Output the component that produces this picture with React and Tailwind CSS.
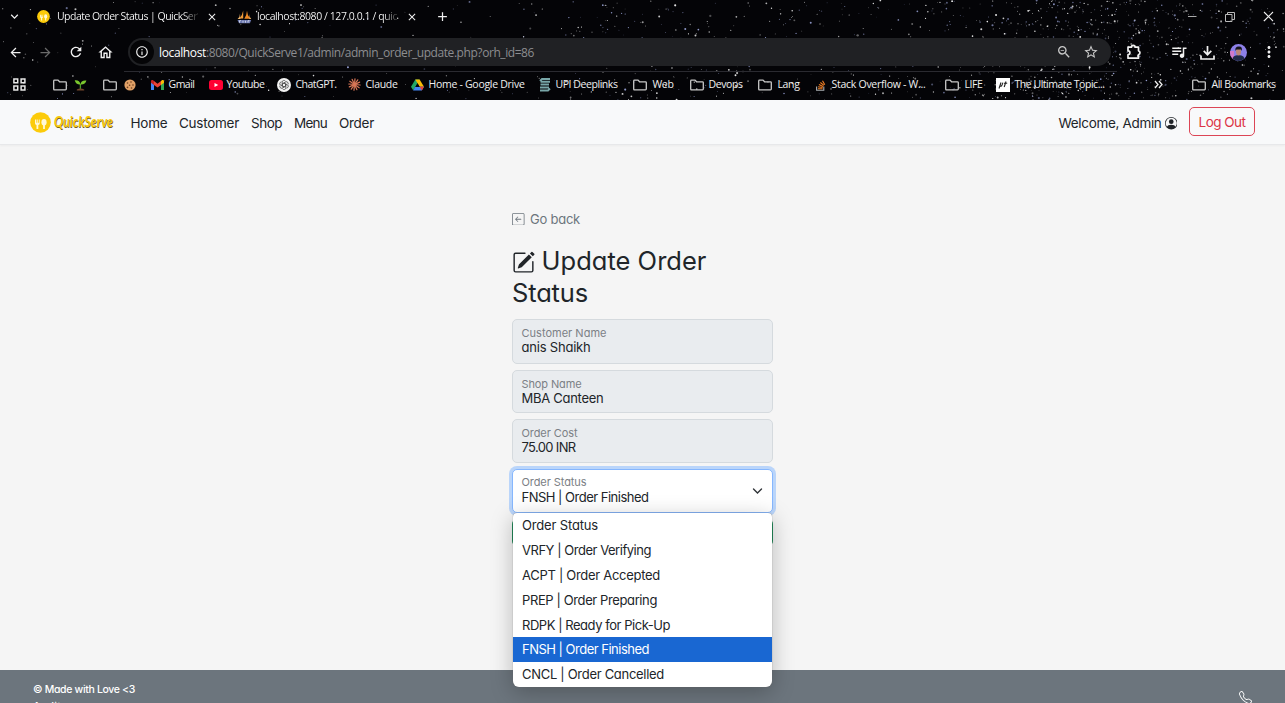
import React, { useLayoutEffect, useRef, useState } from "react";
import { MdArrowBack, MdArrowForward, MdRefresh, MdOutlineHome, MdInfoOutline, MdZoomOut, MdStarBorder, MdQueueMusic, MdClose, MdAdd, MdMoreVert, MdExpandMore } from "react-icons/md";
import { BsPersonCircle, BsArrowLeftSquare, BsPencilSquare, BsTelephone } from "react-icons/bs";

// One line of text whose tracking is adjusted to fill the width given by its class.
function Fit({ className = "", children }) {
  const box = useRef(null);
  const text = useRef(null);
  const [tracking, setTracking] = useState(0);
  useLayoutEffect(() => {
    const natural = text.current.getBoundingClientRect().width;
    setTracking((box.current.clientWidth - natural) / String(children).length);
  }, [children]);
  return (
    <span ref={box} className={`inline-block shrink-0 whitespace-nowrap ${className}`}>
      <span ref={text} style={{ letterSpacing: tracking }}>{children}</span>
    </span>
  );
}

function makeStars() {
  let seed = 4217;
  const rnd = () => {
    seed = (seed * 1664525 + 1013904223) % 4294967296;
    return seed / 4294967296;
  };
  const stars = [];
  for (let i = 0; i < 1500; i++) {
    let x;
    const zone = rnd();
    if (zone < 0.38) x = rnd() * 1285;
    else if (zone < 0.5) x = 560 + rnd() * 300;
    else x = 1095 + (rnd() + rnd() + rnd() - 1.5) * 190;
    stars.push({ x, y: rnd() * 100, r: 0.4 + rnd() * rnd() * 0.8, o: 0.25 + rnd() * 0.7, blue: rnd() < 0.3 });
  }
  return stars;
}
const stars = makeStars();

function StarField() {
  return (
    <svg className="absolute inset-0" width="1285" height="100" viewBox="0 0 1285 100">
      {stars.map((s, i) => (
        <circle key={i} cx={s.x} cy={s.y} r={s.r} fill={s.blue ? "#9aa4d8" : "#ffffff"} opacity={s.o} />
      ))}
    </svg>
  );
}

const Folder = () => (
  <svg width="14" height="12" viewBox="0 0 14 12" fill="none" stroke="#c8c8c8" strokeWidth="1.3">
    <path d="M.7 1.9Q.7 1.1 1.5 1.1H5L6.6 2.8h5.9q.8 0 .8.8v6.5q0 .8-.8.8h-11q-.8 0-.8-.8z" />
  </svg>
);
const Apps = () => (
  <svg width="13" height="13" viewBox="0 0 13 13" fill="none" stroke="#e8e8e8" strokeWidth="1.5">
    <path d="M.9.9h3.8v3.8H.9zM8.1.9h3.8v3.8H8.1zM.9 8.1h3.8v3.8H.9zM8.1 8.1h3.8v3.8H8.1z" />
  </svg>
);
const Sprout = () => (
  <svg width="13" height="13" viewBox="0 0 13 13">
    <path d="M6.4 11V6" stroke="#4c9a2a" strokeWidth="1.3" />
    <path d="M6.4 6.5C3.5 6.7 1.3 5.2.7 2.3 3.7 1.9 6 3 6.4 6.5zM6.4 6.5C6.7 3.3 9 2.2 12.4 2.6 11.7 5.5 9.5 6.9 6.4 6.5z" fill="#7bc72e" />
    <path d="M2.8 11.6q3.6-2 7.400 0v.9H2.800z" fill="#75472c" />
  </svg>
);
const Cookie = () => (
  <svg width="12" height="12" viewBox="0 0 12 12">
    <circle cx="6" cy="6" r="5.6" fill="#e0a066" />
    <g fill="#6d3e1f"><circle cx="3.5" cy="4" r=".8" /><circle cx="7" cy="3" r=".8" /><circle cx="5.600" cy="6.300" r=".8" /><circle cx="9" cy="6" r=".8" /><circle cx="3.500" cy="8.400" r=".8" /><circle cx="7.500" cy="9" r=".8" /></g>
  </svg>
);
const Gmail = () => (
  <svg width="13" height="10" viewBox="0 0 13 10">
    <path d="M0 1.500V10h3V4z" fill="#4285f4" /><path d="M10 4v6h3V1.500z" fill="#34a853" />
    <path d="M10 1v4l3-2.200V1.400C13 0 11.600-.4 10.600.5z" fill="#fbbc04" />
    <path d="M3 1v4l3.500 2.600L10 5V1L6.500 3.700z" fill="#ea4335" />
    <path d="M0 1.400v1.400L3 5V1L2.400.5C1.400-.4 0 0 0 1.400z" fill="#c5221f" />
  </svg>
);
const Youtube = () => (
  <svg width="14" height="10" viewBox="0 0 14 10"><rect width="14" height="10" rx="2.500" fill="#ff0033" /><path d="M5.500 2.900 9.200 5 5.500 7.100z" fill="#fff" /></svg>
);
const ChatGpt = () => (
  <svg width="14" height="14" viewBox="0 0 14 14">
    <circle cx="7" cy="7" r="7" fill="#f3f3f3" />
    <g fill="none" stroke="#444" strokeWidth=".75">
      {[0, 60, 120, 180, 240, 300].map((a) => <path key={a} transform={`rotate(${a} 7 7)`} d="M5.200 6V3.900C5.200 2.300 7.500 1.900 8.500 3.200M5.200 6 7 5l1.800 1" />)}
    </g>
  </svg>
);
const Claude = () => (
  <svg width="13" height="13" viewBox="0 0 13 13" stroke="#d97757" strokeWidth="1.200" strokeLinecap="round">
    {[0, 30, 60, 90, 120, 150].map((a) => <path key={a} transform={`rotate(${a + 5} 6.500 6.500)`} d="M6.500.8v11.400" />)}
  </svg>
);
const Drive = () => (
  <svg width="13" height="12" viewBox="0 0 13 12">
    <path d="M4.300.5h4.300L4.500 7.700l-2.300 3.600L0 7.800z" fill="#23a566" /><path d="M4.300.5h4.300L13 7.800H8.600z" fill="#fbbc04" />
    <path d="M4.200 7.800H13l-2.200 3.700H2.100z" fill="#4285f4" /><path d="M8.600 7.800H13l-2.200 3.700z" fill="#ea4335" />
    <path d="M6.500 4.200 4.300 7.900h4.400z" fill="#05060a" />
  </svg>
);
const Upi = () => (
  <svg width="12" height="14" viewBox="0 0 12 14" fill="none" stroke="#78a6a8" strokeWidth="1.900">
    <path d="M11 1H3L1 3M11 3.800H1.500M1.500 6.500H10M10 9.500H1M1 12.500h8l2-2" />
  </svg>
);
const Stack = () => (
  <svg width="10" height="12" viewBox="0 0 10 12" fill="none" strokeWidth="1.100">
    <path d="M.6 7.500v3.800h7.200V7.500" stroke="#a9aeb3" />
    <path d="M2 9.700h4.600M2.100 7.700l4.500.8M2.900 5.600l4.200 1.900M4.400 3.500 7.900 6.400M6.500 1.800l2.300 3.900" stroke="#f48024" />
  </svg>
);
const Topic = () => (
  <svg width="14" height="14" viewBox="0 0 14 14"><rect width="14" height="14" fill="#fff" /><path d="M3 10.500 5 4.500M4.300 8.200q1.500.6 2.600-3.500M8.200 9 10 3.500M8 5.200h3.200" stroke="#222" strokeWidth="1.100" fill="none" /></svg>
);
const Sails = () => (
  <svg width="15" height="14" viewBox="0 0 15 14">
    <path d="M6.200.5v8H2.500Q5.300 5.500 6.200.5z" fill="#f29b38" />
    <path d="M10 .8q.2 4.500 3.200 8H7.300Q9.800 5 10 .8z" fill="#f08a24" />
    <path d="M3 3.500Q3 7 .6 9h2.800zM12.300 4q0 3 2 5h-2z" fill="#e9b16b" />
    <path d="M.5 10h13.700l-1.300 3.300H2z" fill="#6c78af" />
    <path d="M2.500 12.700v-2h1.500M6 10.700v2M8.500 10.700v2M11 12.700v-2h1.500" stroke="#dfe2ef" strokeWidth=".8" fill="none" />
  </svg>
);
const Extension = () => (
  <svg width="16" height="16" viewBox="0 0 16 16" fill="none" stroke="#f1f1f1" strokeWidth="1.700" strokeLinejoin="round">
    <path d="M2 3.200h3.500a1.800 1.800 0 0 1 3.600 0h3.400v3.600a1.900 1.900 0 0 1 0 3.700v3.700H2v-3.500a1.900 1.900 0 0 0 0-3.800z" />
  </svg>
);
const Logo = ({ size }) => (
  <svg width={size} height={size} viewBox="0 0 21 21">
    <circle cx="10.500" cy="10.500" r="10.300" fill="#fccb0a" />
    <path d="M5 7.500v3.800q0 1.500 1.500 1.700V17h1.800v-4q1.500-.2 1.500-1.700V7.500h-.7v3.300h-.9V7.500h-.9v3.300h-.9V7.500z" fill="#fff8d8" />
    <ellipse cx="14" cy="10.300" rx="2.600" ry="3.300" fill="#fff8d8" /><path d="M13.100 12h1.800v5h-1.800z" fill="#fff8d8" />
  </svg>
);
const Download = () => (
  <svg width="15" height="15" viewBox="0 0 15 15" fill="none" stroke="#f1f1f1" strokeWidth="1.700"><path d="M7.500 1v8.500M3.700 5.900 7.500 9.700l3.800-3.800M1 10.500V14h13v-3.500" /></svg>
);
const Avatar = () => (
  <svg width="17" height="17" viewBox="0 0 17 17">
    <defs><clipPath id="face"><circle cx="8.500" cy="8.500" r="8.500" /></clipPath></defs>
    <g clipPath="url(#face)"><path d="M0 0h17v17H0z" fill="#8d80e8" /><path d="M0 7h4v10H0z" fill="#d17ac8" /><path d="M2 17q0-6 6.500-6t6.500 6z" fill="#202a48" /><ellipse cx="8.500" cy="7.800" rx="2.500" ry="3.600" fill="#b98676" /><path d="M5.500 7Q4.500 2.300 9 2.400q4 .2 2.600 4.600L11 5.500H6.500z" fill="#15151d" /></g>
  </svg>
);

const bookmarks = [
  { icon: Apps, item: "w-[40px]", box: "w-[14px]" },
  { icon: Folder, item: "w-[21px]", box: "w-[14px]" },
  { icon: Sprout, item: "w-[29px]", box: "w-[13px]" },
  { icon: Folder, item: "w-[21px]", box: "w-[14px]" },
  { icon: Cookie, item: "w-[27px]", box: "w-[12px]" },
  { icon: Gmail, item: "w-[58px]", box: "w-[18px]", text: "Gmail", label: "w-[26px]" },
  { icon: Youtube, item: "w-[68px]", box: "w-[18px]", text: "Youtube", label: "w-[38px]" },
  { icon: ChatGpt, item: "w-[71px]", box: "w-[19px]", text: "ChatGPT.", label: "w-[41px]" },
  { icon: Claude, item: "w-[63px]", box: "w-[18px]", text: "Claude", label: "w-[32px]" },
  { icon: Drive, item: "w-[128px]", box: "w-[18px]", text: "Home - Google Drive", label: "w-[96px]" },
  { icon: Upi, item: "w-[94px]", box: "w-[17px]", text: "UPI Deeplinks", label: "w-[62px]" },
  { icon: Folder, item: "w-[57px]", box: "w-[20px]", text: "Web", label: "w-[21px]" },
  { icon: Folder, item: "w-[68px]", box: "w-[19px]", text: "Devops", label: "w-[34px]" },
  { icon: Folder, item: "w-[58px]", box: "w-[20px]", text: "Lang", label: "w-[22px]" },
  { icon: Stack, item: "w-[129px]", box: "w-[16px]", text: "Stack Overflow - W...", label: "w-[94px]" },
  { icon: Folder, item: "w-[51px]", box: "w-[20px]", text: "LIFE", label: "w-[18px]" },
  { icon: Topic, item: "w-[158px]", box: "w-[19px]", text: "The Ultimate Topic...", label: "w-[90px]" },
];

function Browser() {
  return (
    <div className="relative h-[100px] shrink-0 bg-[#040407] font-['Open_Sans','Noto_Sans',sans-serif] text-[#f0f0f0]">
      <StarField />
      <div className="relative flex h-full flex-col">
        <div className="flex h-[33px] items-center pl-[7px] text-[10.5px]">
          <MdExpandMore size={15} />
          <div className="ml-[15px] flex items-center"><Logo size={13} /></div>
          <Fit className="ml-[7px] w-[140px] bg-linear-to-r from-white from-90% to-[#333] bg-clip-text text-transparent">Update Order Status | QuickSer</Fit>
          <MdClose size={12} className="ml-[9px]" />
          <span className="ml-[19px]"><Sails /></span>
          <Fit className="ml-[5px] w-[140px] bg-linear-to-r from-white from-90% to-[#333] bg-clip-text text-transparent">localhost:8080 / 127.0.0.1 / quic</Fit>
          <MdClose size={12} className="ml-[9px]" />
          <MdAdd size={15} className="ml-[17px]" />
          <div className="ml-auto flex items-center gap-[28px] pr-[11px]">
            <svg width="10" height="10" viewBox="0 0 10 10"><path d="M1 4.500h8.500" stroke="#aaa" /></svg>
            <svg width="10" height="10" viewBox="0 0 10 10" fill="none" stroke="#bbb"><path d="M.5 2.500h6.500v7H.5zM2.500 2.500v-2h7v7H7" /></svg>
            <svg width="11" height="11" viewBox="0 0 11 11"><path d="m1 1 9 9m0-9-9 9" stroke="#eee" strokeWidth="1.100" /></svg>
          </div>
        </div>
        <div className="flex h-[38px] items-center">
          <MdArrowBack size={15} className="ml-[8px]" />
          <MdArrowForward size={15} className="ml-[15px] text-[#6a6a6a]" />
          <MdRefresh size={16} className="ml-[15px]" />
          <MdOutlineHome size={17} className="ml-[13px]" />
          <div className="ml-[14px] flex h-[28px] w-[983px] items-center rounded-full bg-[#202124] pl-[2px]">
            <div className="flex size-[24px] items-center justify-center rounded-full bg-[#050507]"><MdInfoOutline size={14} /></div>
            <Fit className="ml-[5px] w-[47px] pt-px text-[12px] text-white">localhost</Fit>
            <Fit className="w-[328px] pt-px text-[12px] text-[#8c8d90]">:8080/QuickServe1/admin/admin_order_update.php?orh_id=86</Fit>
            <MdZoomOut size={16} className="ml-auto text-[#c8c8c8]" />
            <MdStarBorder size={16} className="mr-[12px] ml-[11px] text-[#c8c8c8]" />
          </div>
          <span className="ml-[15px]"><Extension /></span>
          <MdQueueMusic size={18} className="ml-[28px]" />
          <span className="ml-[12px]"><Download /></span>
          <span className="ml-[15px]"><Avatar /></span>
          <MdMoreVert size={18} className="ml-[13px]" />
        </div>
        <div className="ml-[124px] h-px w-[993px] bg-[#2a2a30]" />
        <div className="flex h-[25px] items-center pl-[12.5px] text-[10.5px]">
          {bookmarks.map(({ icon: Icon, item, box, text, label }, i) => (
            <div key={i} className={`flex shrink-0 items-center ${item}`}>
              <span className={`shrink-0 ${box}`}><Icon /></span>
              {text && <Fit className={label}>{text}</Fit>}
            </div>
          ))}
          <svg width="9" height="9" viewBox="0 0 9 9" fill="none" stroke="#eee" strokeWidth="1.300"><path d="m1 1 3 3.500-3 3.500M5 1l3 3.500L5 8" /></svg>
          <span className="ml-[29px] w-[20px] shrink-0"><Folder /></span>
          <Fit className="w-[64px]">All Bookmarks</Fit>
        </div>
      </div>
    </div>
  );
}

function Field({ label, value, labelWidth, valueWidth, className = "" }) {
  return (
    <div className={`flex flex-col rounded-[5px] border border-[#d5dade] bg-[#e9ecef] pl-[8.5px] ${className}`}>
      <Fit className={`mt-[6px] h-[14px] text-[11px] leading-[15px] text-[#7b8085] ${labelWidth}`}>{label}</Fit>
      <Fit className={`h-[15px] text-[13px] leading-[15px] ${valueWidth}`}>{value}</Fit>
    </div>
  );
}

const options = [
  ["Order Status", "w-[76px]"],
  ["VRFY | Order Verifying", "w-[129px]"],
  ["ACPT | Order Accepted", "w-[138px]"],
  ["PREP | Order Preparing", "w-[135px]"],
  ["RDPK | Ready for Pick-Up", "w-[148px]"],
  ["FNSH | Order Finished", "w-[127px]"],
  ["CNCL | Order Cancelled", "w-[142px]"],
];

export default function App() {
  return (
    <div className="flex h-[703px] w-[1285px] flex-col overflow-hidden bg-[#f5f5f5] font-['Inter',sans-serif] text-[#212529] [font-feature-settings:'cv11']">
      <Browser />
      <nav className="flex h-[45px] shrink-0 items-center border-b border-[#e7e8ea] bg-[#f8f9fa] pl-[30px] text-[13.5px] shadow-[0_1px_2px_#0000000a]">
        <Logo size={21} />
        <svg className="ml-[2px] overflow-visible" width="62" height="24" viewBox="0 0 62 24">
          <text x="1.5" y="17.7" textLength="59" lengthAdjust="spacingAndGlyphs" fontFamily="Lato" fontStyle="italic" fontWeight="700" fontSize="16" fill="#77611c">QuickServe</text>
          <text x="1" y="17" textLength="59" lengthAdjust="spacingAndGlyphs" fontFamily="Lato" fontStyle="italic" fontWeight="700" fontSize="16" fill="#f8c90e">QuickServe</text>
        </svg>
        <div className="mt-[3px] ml-[15.5px] flex gap-[12px]">
          <Fit className="w-[36.5px]">Home</Fit>
          <Fit className="w-[60px]">Customer</Fit>
          <Fit className="w-[31px]">Shop</Fit>
          <Fit className="w-[33px]">Menu</Fit>
          <Fit className="w-[35px]">Order</Fit>
        </div>
        <Fit className="mt-[2px] ml-auto w-[103px]">Welcome, Admin</Fit>
        <BsPersonCircle size={12.5} className="mt-[3px] ml-[3px]" />
        <button className="mr-[30px] mb-[2px] ml-[12px] flex h-[29px] w-[66px] items-center justify-center rounded-[5px] border border-[#dc4555] pt-[2px] text-[#dc3545]"><Fit className="w-[47px] text-left">Log Out</Fit></button>
      </nav>
      <main className="flex h-[525px] shrink-0 justify-center">
        <div className="flex w-[261px] flex-col pt-[64px]">
          <div className="flex h-[20px] items-center text-[13px] text-[#6c757d]">
            <BsArrowLeftSquare size={12.5} /><Fit className="ml-[5.5px] w-[50px] pt-px">Go back</Fit>
          </div>
          <h1 className="mt-[16px] text-[25.5px] leading-[31.5px]">
            <span className="flex h-[32px] items-center"><BsPencilSquare size={23} className="mt-[3px] mr-[6.5px]" /><Fit className="w-[164.5px]">Update Order</Fit></span>
            <Fit className="block w-[76px]">Status</Fit>
          </h1>
          <Field className="mt-[10px] h-[45px]" label="Customer Name" value="anis Shaikh" labelWidth="w-[85px]" valueWidth="w-[69px]" />
          <Field className="mt-[6px] h-[43px]" label="Shop Name" value="MBA Canteen" labelWidth="w-[60px]" valueWidth="w-[82px]" />
          <Field className="mt-[6px] h-[44px]" label="Order Cost" value="75.00 INR" labelWidth="w-[56px]" valueWidth="w-[54px]" />
          <div className="relative mt-[6px]">
            <div className="flex h-[44px] flex-col rounded-[5px] border border-[#86b7fe] bg-white pl-[8.5px] shadow-[0_0_0_3px_#bad5fa]">
              <Fit className="mt-[5px] h-[15px] w-[65px] text-[11px] leading-[15px] text-[#7b8085]">Order Status</Fit>
              <Fit className="h-[15px] w-[127px] text-[13px] leading-[15px]">FNSH | Order Finished</Fit>
            </div>
            <svg className="absolute top-[18px] right-[10px]" width="11" height="9" viewBox="0 0 11 9" fill="none" stroke="#303438" strokeWidth="1.400" strokeLinecap="round"><path d="m1.500 2 4 4 4-4" /></svg>
            <div className="absolute top-[44.5px] left-[1px] z-10 w-[259px] overflow-hidden rounded-t-[4px] rounded-b-[6px] bg-white text-[13px] shadow-[0_0_1px_#666,0_5px_22px_#00000040]">
              {options.map(([text, width]) => (
                <div key={text} className={`flex h-[24.850px] items-center pt-px pl-[9px] ${text.startsWith("FNSH") ? "bg-[#1967d2] text-white" : ""}`}><Fit className={width}>{text}</Fit></div>
              ))}
            </div>
          </div>
          <button className="mt-[6px] h-[27px] rounded-[5px] bg-[#198754]" />
        </div>
      </main>
      <footer className="flex h-[33px] shrink-0 justify-between bg-[#6c757d] pr-[33px] pl-[33px] text-white">
        <div className="flex flex-col pt-[12px] text-[10.5px] leading-[15px] font-medium"><Fit className="w-[102px]">© Made with Love &lt;3</Fit><span className="mt-[1.5px] tracking-[.3px]">Aaditya</span></div>
        <BsTelephone size={13} className="mt-[21px] shrink-0" />
      </footer>
    </div>
  );
}
